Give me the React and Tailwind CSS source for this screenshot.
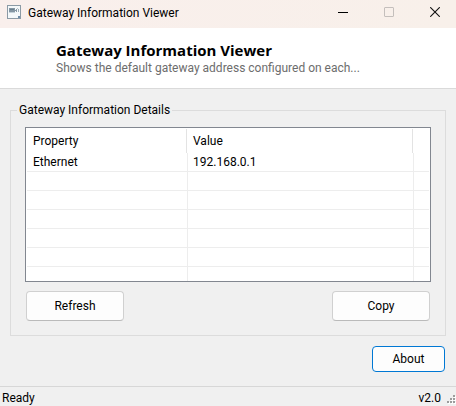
import React from 'react';
import clsx from 'clsx';

const gateways = [{ name: 'Ethernet', address: '192.168.0.1' }];

// Blank grid lines under the data, the last one is cut off by the list frame
const EMPTY_ROWS = 6;

const AppIcon = () => (
  <svg width="14" height="14" viewBox="0 0 14 14" shapeRendering="crispEdges" aria-hidden="true">
    <rect x="0.5" y="0.5" width="13" height="13" fill="#f4f8fa" stroke="#8b9aa5" />
    <rect x="2" y="3" width="6" height="4" fill="#8496a3" />
    <rect x="3" y="4" width="4" height="1" fill="#6a7e8d" />
    <rect x="2" y="7" width="6" height="1" fill="#c3d0d8" />
    <rect x="8" y="5" width="1" height="1" fill="#8496a3" />
    <rect x="9" y="4" width="1" height="3" fill="#8496a3" />
    <rect x="10" y="3" width="1" height="1" fill="#b4c1c9" />
    <rect x="11" y="4" width="1" height="3" fill="#9aabb6" />
    <rect x="11" y="11" width="2" height="2" fill="#6d8ba8" />
  </svg>
);

const SizeGrip = () => (
  <svg width="11" height="14" viewBox="0 0 11 14" shapeRendering="crispEdges" aria-hidden="true">
    {[[8, 3], [5, 6], [8, 6], [2, 9], [5, 9], [8, 9]].map(([x, y]) => (
      <g key={`${x}-${y}`}>
        <rect x={x + 1} y={y + 1} width="2" height="2" fill="#ffffff" />
        <rect x={x} y={y} width="2" height="2" fill="#9c9c9c" />
      </g>
    ))}
  </svg>
);

const Button = ({ className, children }) => (
  <button type="button" className={clsx('rounded border bg-[#fdfdfd] text-center', className)}>
    {children}
  </button>
);

const TitleBar = () => (
  <div className="flex h-7 items-center overflow-hidden bg-linear-to-r from-[#f9efec] to-[#f8f0ea] pb-1 pl-[7px]">
    <AppIcon />
    <span className="ml-[7px] flex-1 pt-0.5">Gateway Information Viewer</span>
    <div className="-mr-0.5 flex">
      <button type="button" aria-label="Minimize" className="flex h-6 w-[46px] items-center justify-center">
        <svg width="10" height="10" viewBox="0 0 10 10" shapeRendering="crispEdges">
          <rect x="0" y="5" width="10" height="1" fill="#000000" />
        </svg>
      </button>
      <button type="button" aria-label="Maximize" disabled className="flex h-6 w-[46px] items-center justify-center">
        <svg width="10" height="10" viewBox="0 0 10 10">
          <rect x="0.5" y="0.5" width="9" height="9" rx="0.5" fill="none" stroke="#c4bfbc" />
        </svg>
      </button>
      <button type="button" aria-label="Close" className="flex h-6 w-[46px] items-center justify-center">
        <svg width="10" height="10" viewBox="0 0 10 10">
          <path d="M0.2 0.2L9.8 9.8M9.8 0.2L0.2 9.8" stroke="#111111" strokeWidth="1.1" />
        </svg>
      </button>
    </div>
  </div>
);

const GatewayTable = () => (
  <div className="mt-[9px] h-[155px] overflow-hidden border border-[#828790] bg-white p-px">
    <table className="w-full table-fixed border-separate border-spacing-0 text-left">
      <colgroup>
        <col className="w-[161px]" />
        <col />
        <col className="w-[15px]" />
      </colgroup>
      <thead>
        <tr>
          <th className="h-6 p-0 pr-px font-normal">
            <div className="h-6 border-r border-[#e3e3e3] pl-1.5 leading-6">Property</div>
          </th>
          <th className="h-6 p-0 pr-px font-normal">
            <div className="h-6 border-r border-[#e3e3e3] pl-[5px] leading-6">Value</div>
          </th>
          <td />
        </tr>
      </thead>
      <tbody>
        {gateways.map((gateway) => (
          <tr key={gateway.name}>
            <td className="h-[19px] border-r border-b border-[#ededed] p-0 pl-1.5 leading-[18px]">{gateway.name}</td>
            <td className="h-[19px] border-r border-b border-[#ededed] p-0 pl-[5px] leading-[18px]">{gateway.address}</td>
            <td className="border-b border-[#ededed] p-0" />
          </tr>
        ))}
        {Array.from({ length: EMPTY_ROWS }, (_, i) => (
          <tr key={i}>
            <td className="h-[19px] border-r border-b border-[#ededed] p-0" />
            <td className="border-r border-b border-[#ededed] p-0" />
            <td className="border-b border-[#ededed] p-0" />
          </tr>
        ))}
      </tbody>
    </table>
  </div>
);

const App = () => {
  return (
    <div className="flex min-h-screen flex-col bg-[#f0f0f0] font-[Roboto,'Open_Sans',sans-serif] text-[12px] leading-4 text-black">
      <TitleBar />

      <header className="border-b border-[#dadada] bg-white pt-3 pb-3 pl-14">
        <h1 className="font-['Open_Sans','Noto_Sans',sans-serif] text-[15px] leading-5 font-bold">
          Gateway Information Viewer
        </h1>
        <p className="text-[#6d6d6d]">Shows the default gateway address configured on each...</p>
      </header>

      <main className="px-2.5 pt-[13px] pb-3.5">
        <fieldset className="border border-[#dcdcdc] px-3.5 pb-3.5">
          <legend className="-ml-2 px-0.5">Gateway Information Details</legend>
          <GatewayTable />
          <div className="mt-[9px] flex justify-between px-px">
            <Button className="h-[30px] w-[98px] border-[#d0d0d0] border-b-[#bababa]">Refresh</Button>
            <Button className="h-[30px] w-[98px] border-[#d0d0d0] border-b-[#bababa]">Copy</Button>
          </div>
        </fieldset>

        <div className="mt-2.5 flex justify-end pr-px">
          <Button className="h-[26px] w-[73px] border-[#0078d4]">About</Button>
        </div>
      </main>

      <footer className="mt-auto flex h-5 items-end border-t border-[#d7d7d7] pl-0.5">
        <span className="flex-1">Ready</span>
        <span className="mr-1">v2.0</span>
        <SizeGrip />
      </footer>
    </div>
  );
};

export default App;
